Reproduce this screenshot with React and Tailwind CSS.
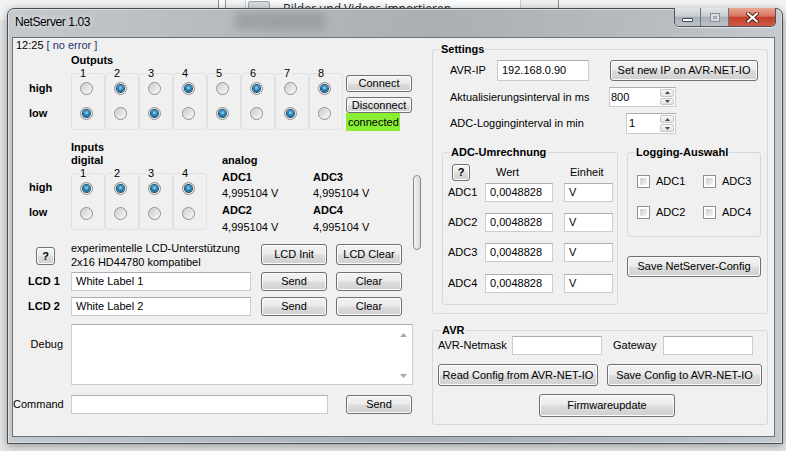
import React from "react";

const BTN =
  "flex items-center justify-center rounded-[3px] border border-[#707070] bg-[linear-gradient(to_bottom,#f3f3f3_0%,#ebebeb_48%,#dcdcdc_52%,#d0d0d0_100%)] shadow-[inset_0_0_0_1px_#fcfcfc] text-[11px] leading-[13px] text-black whitespace-nowrap";

function Btn({ className = "", children }) {
  return <div className={`${BTN} ${className}`}>{children}</div>;
}

function TextBox({ className = "", children }) {
  return (
    <div
      className={`flex items-center border border-[#c9ccd2] border-t-[#a9adb4] bg-white pl-[4px] text-[11px] leading-[13px] whitespace-nowrap ${className}`}
    >
      {children}
    </div>
  );
}

function Radio({ checked }) {
  return (
    <div className="flex h-[13px] w-[13px] items-center justify-center rounded-full border border-[#8e8f8f] bg-[linear-gradient(135deg,#d6d6d6,#fbfbfb)]">
      {checked ? (
        <div className="h-[7px] w-[7px] rounded-full bg-[radial-gradient(circle_at_50%_40%,#8ddcf8_0%,#2a86b8_45%,#0d4672_85%)] shadow-[0_0_0_1px_#1d4e70]" />
      ) : (
        <div className="h-[9px] w-[9px] rounded-full bg-[linear-gradient(135deg,#cdcdcd,#f7f7f7)]" />
      )}
    </div>
  );
}

function Check() {
  return (
    <div className="h-[13px] w-[13px] border border-[#8e8f8f] bg-white p-[2px]">
      <div className="h-full w-full bg-[linear-gradient(135deg,#c9cdd3,#f4f4f4)]" />
    </div>
  );
}

function IOBox({ n, high, low }) {
  return (
    <fieldset className="h-[63px] w-[34px] rounded-[3px] border border-[#dfe1e3]">
      <legend className="ml-[7px] px-[1px] text-[11px] leading-[13px]">{n}</legend>
      <div className="flex flex-col gap-[12px] pl-[8px] pt-[2px]">
        <Radio checked={high} />
        <Radio checked={low} />
      </div>
    </fieldset>
  );
}

function Spin({ className = "", value, pad = "pl-[1px]" }) {
  return (
    <div className={`flex border border-[#c9ccd2] border-t-[#a9adb4] bg-white text-[11px] ${className}`}>
      <div className={`flex flex-1 items-center ${pad}`}>{value}</div>
      <div className="flex w-[16px] flex-col gap-[1px] p-[1px]">
        <div className="flex flex-1 items-center justify-center rounded-[2px] border border-[#c3c6cb] bg-[linear-gradient(#f7f7f7,#e2e2e2)]">
          <svg width="5" height="3" viewBox="0 0 5 3">
            <path d="M0 3 L2.5 0 L5 3Z" fill="#4a4a4a" />
          </svg>
        </div>
        <div className="flex flex-1 items-center justify-center rounded-[2px] border border-[#c3c6cb] bg-[linear-gradient(#f7f7f7,#e2e2e2)]">
          <svg width="5" height="3" viewBox="0 0 5 3">
            <path d="M0 0 L2.5 3 L5 0Z" fill="#4a4a4a" />
          </svg>
        </div>
      </div>
    </div>
  );
}

function Outputs() {
  const high = [false, true, false, true, false, true, false, true];
  return (
    <div className="flex h-[79px]">
      <div className="w-[58px] pl-[16px] font-bold">
        <div className="mt-[30px]">high</div>
        <div className="mt-[12px]">low</div>
      </div>
      <div className="w-[272px]">
        <div className="mt-[2px] font-bold">Outputs</div>
        <div className="flex">
          {high.map((h, i) => (
            <IOBox key={i} n={i + 1} high={h} low={!h} />
          ))}
        </div>
      </div>
      <div className="ml-[3px] w-[66px]">
        <Btn className="mt-[23px] h-[17px] w-[66px]">Connect</Btn>
        <Btn className="mt-[5px] h-[16px] w-[66px]">Disconnect</Btn>
        <div className="flex h-[18px] w-[54px] items-center bg-[#8aee33] pl-[2px]">connected</div>
      </div>
    </div>
  );
}

function Inputs() {
  return (
    <div className="flex h-[99px]">
      <div className="w-[58px] pl-[16px] font-bold">
        <div className="mt-[50px]">high</div>
        <div className="mt-[12px]">low</div>
      </div>
      <div className="w-[136px]">
        <div className="mt-[10px] font-bold">Inputs</div>
        <div className="font-bold">digital</div>
        <div className="flex">
          {[1, 2, 3, 4].map((n) => (
            <IOBox key={n} n={n} high={true} low={false} />
          ))}
        </div>
      </div>
      <div className="ml-[15px]">
        <div className="mt-[23px] font-bold">analog</div>
        <div className="mt-[2px] flex">
          <div className="w-[91px]">
            <div className="font-bold leading-[16px]">ADC1</div>
            <div className="leading-[17px]">4,995104 V</div>
            <div className="font-bold leading-[17px]">ADC2</div>
            <div className="leading-[16px]">4,995104 V</div>
          </div>
          <div className="w-[91px]">
            <div className="font-bold leading-[16px]">ADC3</div>
            <div className="leading-[17px]">4,995104 V</div>
            <div className="font-bold leading-[17px]">ADC4</div>
            <div className="leading-[16px]">4,995104 V</div>
          </div>
        </div>
      </div>
    </div>
  );
}

function LeftPanel() {
  return (
    <div className="flex w-[409px]">
      <div className="w-[400px]">
        <div className="pl-[3px] pt-[1px]">
          12:25 <span className="text-[#22336a]">[ no error ]</span>
        </div>
        <Outputs />
        <Inputs />
        <div className="mt-[11px] flex h-[24px] items-start">
          <div className="w-[58px]">
            <Btn className="ml-[23px] mt-[6px] h-[18px] w-[19px] font-bold">?</Btn>
          </div>
          <div className="w-[190px] leading-[14px]">
            <div>experimentelle LCD-Unterstützung</div>
            <div>2x16 HD44780 kompatibel</div>
          </div>
          <Btn className="mt-[3px] h-[21px] w-[66px]">LCD Init</Btn>
          <Btn className="ml-[9px] mt-[3px] h-[21px] w-[66px]">LCD Clear</Btn>
        </div>
        <div className="mt-[7px] flex h-[19px] items-center">
          <div className="w-[58px] pl-[15px] font-bold">LCD 1</div>
          <TextBox className="h-[19px] w-[180px]">White Label 1</TextBox>
          <Btn className="ml-[10px] h-[19px] w-[66px]">Send</Btn>
          <Btn className="ml-[9px] h-[19px] w-[66px]">Clear</Btn>
        </div>
        <div className="mt-[6px] flex h-[19px] items-center">
          <div className="w-[58px] pl-[15px] font-bold">LCD 2</div>
          <TextBox className="h-[19px] w-[180px]">White Label 2</TextBox>
          <Btn className="ml-[10px] h-[19px] w-[66px]">Send</Btn>
          <Btn className="ml-[9px] h-[19px] w-[66px]">Clear</Btn>
        </div>
        <div className="mt-[8px] flex h-[61px]">
          <div className="w-[58px] pr-[8px] pt-[14px] text-right">Debug</div>
          <div className="flex h-[61px] w-[342px] justify-end border border-[#c9ccd2] border-t-[#a9adb4] bg-white">
            <div className="flex w-[17px] flex-col items-center justify-between pb-[6px] pt-[8px]">
              <svg width="7" height="4" viewBox="0 0 7 4">
                <path d="M0 4 L3.5 0 L7 4Z" fill="#a8a8a8" />
              </svg>
              <svg width="7" height="4" viewBox="0 0 7 4">
                <path d="M0 0 L3.5 4 L7 0Z" fill="#a8a8a8" />
              </svg>
            </div>
          </div>
        </div>
        <div className="mt-[10px] flex h-[19px] items-center">
          <div className="w-[58px] pr-[8px] text-right">Command</div>
          <TextBox className="h-[19px] w-[257px]" />
          <Btn className="ml-[18px] h-[19px] w-[66px]">Send</Btn>
        </div>
      </div>
      <div className="w-[9px]">
        <div className="mt-[137px] h-[75px] w-[8px] rounded-[4px] border border-[#8b8b8b] bg-[linear-gradient(to_right,#f4f4f4,#dadada)]" />
      </div>
    </div>
  );
}

function RightPanel() {
  return (
    <div className="ml-[10px] w-[336px]">
      <fieldset className="mt-[5px] w-[336px] rounded-[3px] border border-[#d6d9dc] pb-[8px]">
        <legend className="ml-[7px] px-[1px] font-bold leading-[13px]">Settings</legend>
        <div className="mt-[4px] flex h-[21px] items-center pl-[17px]">
          <div className="w-[47px]">AVR-IP</div>
          <TextBox className="h-[21px] w-[92px]">192.168.0.90</TextBox>
          <Btn className="ml-[21px] h-[21px] w-[148px]">Set new IP on AVR-NET-IO</Btn>
        </div>
        <div className="mt-[6px] flex h-[20px] items-center pl-[17px]">
          <div className="w-[159px]">Aktualisierungsinterval in ms</div>
          <Spin className="h-[20px] w-[67px]" value="800" />
        </div>
        <div className="mt-[6px] flex h-[21px] items-center pl-[17px]">
          <div className="w-[176px]">ADC-Logginginterval in min</div>
          <Spin className="h-[21px] w-[50px]" value="1" pad="pl-[2px]" />
        </div>
        <div className="mt-[12px] flex pl-[9px]">
          <fieldset className="h-[159px] w-[176px] rounded-[3px] border border-[#d6d9dc]">
            <legend className="ml-[7px] px-[1px] font-bold leading-[13px]">ADC-Umrechnung</legend>
            <div className="mt-[5px] flex h-[17px] items-center">
              <div className="w-[53px] pl-[9px]">
                <Btn className="h-[17px] w-[18px] font-bold">?</Btn>
              </div>
              <div className="w-[74px]">Wert</div>
              <div>Einheit</div>
            </div>
            {["ADC1", "ADC2", "ADC3", "ADC4"].map((a, i) => (
              <div
                key={a}
                className={`flex h-[19px] items-center ${
                  i === 0 ? "mt-[2px]" : i === 3 ? "mt-[12px]" : "mt-[11px]"
                }`}
              >
                <div className="w-[42px] pl-[5px]">{a}</div>
                <TextBox className="h-[19px] w-[68px]">0,0048828</TextBox>
                <TextBox className="ml-[11px] h-[19px] w-[49px]">V</TextBox>
              </div>
            ))}
          </fieldset>
          <div className="ml-[9px] w-[134px]">
            <fieldset className="h-[91px] w-[134px] rounded-[3px] border border-[#d6d9dc]">
              <legend className="ml-[7px] px-[1px] font-bold leading-[13px]">Logging-Auswahl</legend>
              <div className="mt-[16px] flex h-[13px]">
                <div className="flex w-[75px] items-center gap-[6px] pl-[9px]">
                  <Check />
                  <span>ADC1</span>
                </div>
                <div className="flex items-center gap-[6px]">
                  <Check />
                  <span>ADC3</span>
                </div>
              </div>
              <div className="mt-[18px] flex h-[13px]">
                <div className="flex w-[75px] items-center gap-[6px] pl-[9px]">
                  <Check />
                  <span>ADC2</span>
                </div>
                <div className="flex items-center gap-[6px]">
                  <Check />
                  <span>ADC4</span>
                </div>
              </div>
            </fieldset>
            <Btn className="mt-[19px] h-[21px] w-[134px]">Save NetServer-Config</Btn>
          </div>
        </div>
      </fieldset>
      <fieldset className="mt-[10px] w-[336px] rounded-[3px] border border-[#d6d9dc] pb-[7px]">
        <legend className="ml-[8px] px-[1px] font-bold leading-[12px]">AVR</legend>
        <div className="flex h-[19px] items-center pl-[5px]">
          <div className="w-[74px]">AVR-Netmask</div>
          <TextBox className="h-[19px] w-[90px]" />
          <div className="ml-[11px] w-[50px]">Gateway</div>
          <TextBox className="h-[19px] w-[90px]" />
        </div>
        <div className="mt-[9px] flex pl-[5px]">
          <Btn className="h-[22px] w-[160px]">Read Config from AVR-NET-IO</Btn>
          <Btn className="ml-[9px] h-[22px] w-[155px]">Save Config to AVR-NET-IO</Btn>
        </div>
        <div className="mt-[8px] flex">
          <Btn className="ml-[106px] h-[23px] w-[136px]">Firmwareupdate</Btn>
        </div>
      </fieldset>
    </div>
  );
}

function CaptionButtons() {
  return (
    <div className="-mt-[1px] ml-auto mr-[6px] flex h-[19px] overflow-hidden rounded-b-[5px] border border-t-0 border-[#4f545a] shadow-[0_1px_0_rgba(255,255,255,0.6)]">
      <div className="flex w-[26px] items-end justify-center border-r border-[#6c7177] bg-[linear-gradient(to_bottom,#e2e6ea,#c6ccd2_45%,#a9b0b7_52%,#bcc3ca)] pb-[4px]">
        <div className="h-[4px] w-[11px] rounded-[1px] border border-[#3f4449] bg-white" />
      </div>
      <div className="flex w-[28px] items-center justify-center border-r border-[#6c7177] bg-[linear-gradient(to_bottom,#e2e6ea,#c6ccd2_45%,#a9b0b7_52%,#bcc3ca)]">
        <div className="h-[9px] w-[10px] border border-[#8a9096] bg-[#d9dde1] p-[2px]">
          <div className="h-full w-full border border-[#9aa0a6] bg-[#c6cbd0]" />
        </div>
      </div>
      <div className="flex w-[46px] items-center justify-center bg-[linear-gradient(to_bottom,#eba796,#d8735f_45%,#c3402a_52%,#cf5a43)]">
        <svg width="13" height="11" viewBox="0 0 13 11">
          <path d="M2 1.5 L11 9.5 M11 1.5 L2 9.5" stroke="#4a1f18" strokeWidth="4" strokeLinecap="round" />
          <path d="M2 1.5 L11 9.5 M11 1.5 L2 9.5" stroke="#ffffff" strokeWidth="2.2" strokeLinecap="round" />
        </svg>
      </div>
    </div>
  );
}

export default function App() {
  return (
    <div className="relative h-[451px] w-[786px] overflow-hidden bg-[#e6e6e6] font-['Liberation_Sans',Arial,sans-serif] text-[11px] leading-[13px] text-black">
      {/* desktop background strip */}
      <div className="flex h-[20px]">
        <div className="w-[218px] bg-[#f2f2f2]" />
        <div className="w-[1px] bg-[#8d8d8d]" />
        <div className="w-[6px] bg-[#fafafa]" />
        <div className="w-[1px] bg-[#9a9a9a]" />
        <div className="w-[19px] bg-[#f4f4f4]" />
        <div className="flex w-[276px] border-x border-[#c7cdd4] bg-[#fbfcfd]">
          <div className="ml-[2px] mt-[1px] h-[14px] w-[22px] rounded-[2px] border border-[#9ca3aa] bg-[#d9dde1]" />
          <div className="ml-[13px] mt-[1px] font-['Open_Sans',sans-serif] text-[12px] leading-[15px] text-[#1e1e1e]">
            Bilder und Videos importieren
          </div>
        </div>
        <div className="w-[37px] bg-[#f0f0f0]" />
        <div className="w-[1px] bg-[#8d8d8d]" />
        <div className="flex-1 bg-[#f3f3f3]" />
      </div>

      {/* window */}
      <div className="absolute left-[7px] top-[8px] flex h-[436px] w-[776px] flex-col rounded-t-[7px] border border-[#474c51] bg-[linear-gradient(to_right,#c4c9ce,#b4b9be_30%,#aaafb4_55%,#b8bdc2_85%,#c5cacf)] shadow-[0_2px_10px_rgba(0,0,0,0.35),inset_0_0_0_1px_rgba(255,255,255,0.45)]">
        <div className="relative flex h-[28px] items-start">
          <div className="pl-[7px] pt-[6px] font-['Liberation_Sans',sans-serif] text-[12px] leading-[15px] tracking-[-0.4px] [text-shadow:0_0_6px_rgba(255,255,255,0.9)]">
            NetServer 1.03
          </div>
          <div className="ml-[145px] mt-[3px] h-[18px] w-[90px] rounded-[4px] bg-[#8c9196] opacity-60 blur-[4px]" />
          <CaptionButtons />
        </div>
        <div className="ml-[4px] flex h-[400px] w-[763px] border border-[#6b7177] bg-[#f0f0f0]">
          <LeftPanel />
          <RightPanel />
        </div>
      </div>
    </div>
  );
}
